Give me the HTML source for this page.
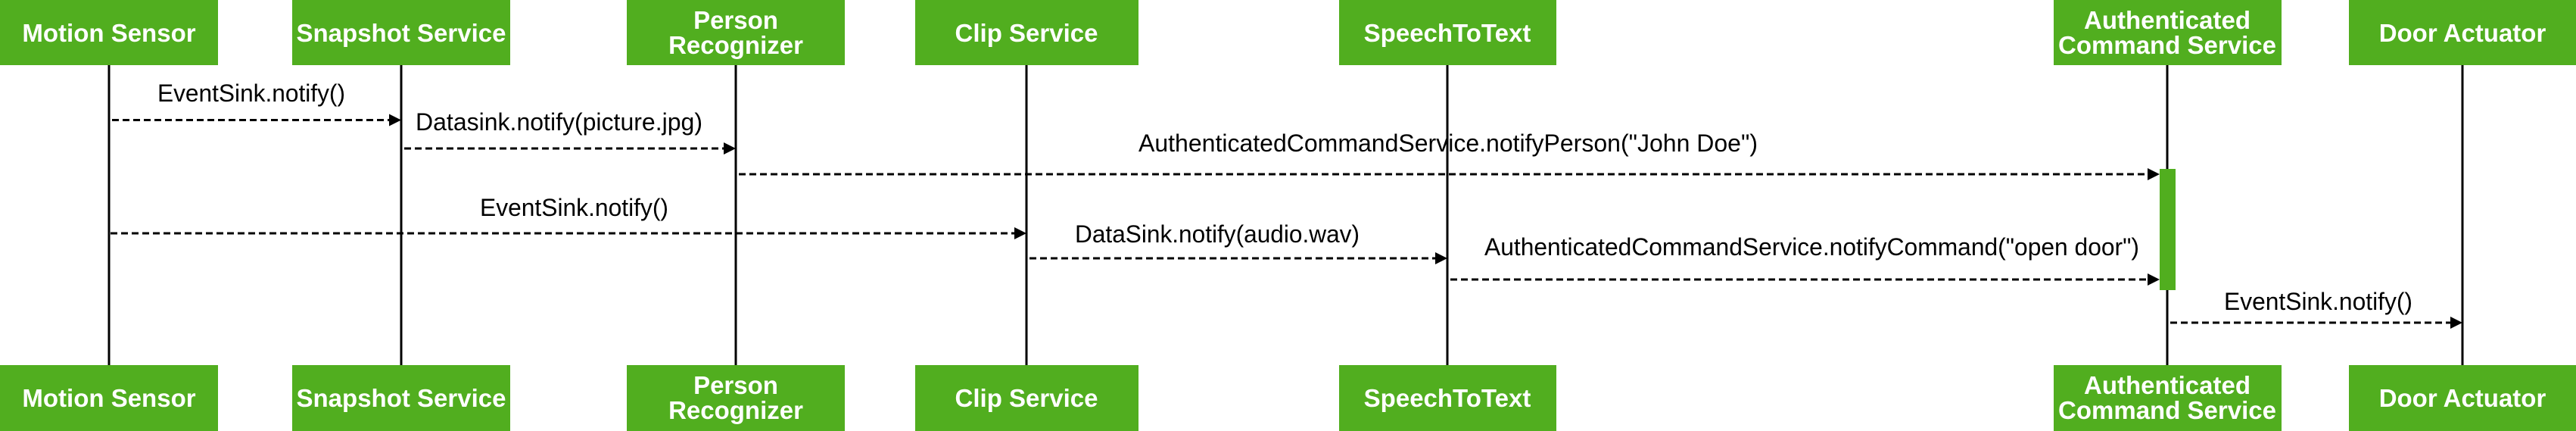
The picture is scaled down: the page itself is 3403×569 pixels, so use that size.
<!DOCTYPE html>
<html><head><meta charset="utf-8"><style>
html,body{margin:0;padding:0;background:#fff;width:3403px;height:569px;overflow:hidden}
svg{display:block}
.b{font-family:"Liberation Sans",sans-serif;font-weight:bold;font-size:33px;fill:#fff}
.t{font-family:"Liberation Sans",sans-serif;font-size:32px;fill:#000}
</style></head><body>
<svg width="3403" height="569" viewBox="0 0 3403 569" xmlns="http://www.w3.org/2000/svg">
<g stroke="#000" stroke-width="3">
<line x1="144" y1="86" x2="144" y2="482"/>
<line x1="530" y1="86" x2="530" y2="482"/>
<line x1="972" y1="86" x2="972" y2="482"/>
<line x1="1356" y1="86" x2="1356" y2="482"/>
<line x1="1912" y1="86" x2="1912" y2="482"/>
<line x1="2863" y1="86" x2="2863" y2="482"/>
<line x1="3253" y1="86" x2="3253" y2="482"/>
</g>
<rect x="2853" y="223" width="21" height="160" fill="#51AE1F"/>
<g stroke="#000" stroke-width="3" stroke-dasharray="9,5" fill="none">
<line x1="148" y1="158.5" x2="514" y2="158.5"/>
<line x1="534" y1="196" x2="956" y2="196"/>
<line x1="976" y1="230" x2="2837" y2="230"/>
<line x1="146" y1="308" x2="1340" y2="308"/>
<line x1="1360" y1="341" x2="1896" y2="341"/>
<line x1="1916" y1="369" x2="2837" y2="369"/>
<line x1="2867" y1="426" x2="3237" y2="426"/>
</g>
<g fill="#000">
<polygon points="514,150.5 530,158.5 514,166.5"/>
<polygon points="956,188 972,196 956,204"/>
<polygon points="2837,222 2853,230 2837,238"/>
<polygon points="1340,300 1356,308 1340,316"/>
<polygon points="1896,333 1912,341 1896,349"/>
<polygon points="2837,361 2853,369 2837,377"/>
<polygon points="3237,418 3253,426 3237,434"/>
</g>
<text class="t" x="208" y="134" textLength="248" lengthAdjust="spacingAndGlyphs">EventSink.notify()</text>
<text class="t" x="549" y="172" textLength="379" lengthAdjust="spacingAndGlyphs">Datasink.notify(picture.jpg)</text>
<text class="t" x="1504" y="200" textLength="818" lengthAdjust="spacingAndGlyphs">AuthenticatedCommandService.notifyPerson("John Doe")</text>
<text class="t" x="634" y="285" textLength="249" lengthAdjust="spacingAndGlyphs">EventSink.notify()</text>
<text class="t" x="1420" y="320" textLength="376" lengthAdjust="spacingAndGlyphs">DataSink.notify(audio.wav)</text>
<text class="t" x="1961" y="337" textLength="865" lengthAdjust="spacingAndGlyphs">AuthenticatedCommandService.notifyCommand("open door")</text>
<text class="t" x="2938" y="409" textLength="249" lengthAdjust="spacingAndGlyphs">EventSink.notify()</text>
<g fill="#51AE1F">
<rect x="0" y="0" width="288" height="86"/><rect x="0" y="482" width="288" height="87"/>
<rect x="386" y="0" width="288" height="86"/><rect x="386" y="482" width="288" height="87"/>
<rect x="828" y="0" width="288" height="86"/><rect x="828" y="482" width="288" height="87"/>
<rect x="1209" y="0" width="295" height="86"/><rect x="1209" y="482" width="295" height="87"/>
<rect x="1769" y="0" width="287" height="86"/><rect x="1769" y="482" width="287" height="87"/>
<rect x="2713" y="0" width="301" height="86"/><rect x="2713" y="482" width="301" height="87"/>
<rect x="3103" y="0" width="300" height="86"/><rect x="3103" y="482" width="300" height="87"/>
</g>
<g class="b" text-anchor="middle">
<text x="144" y="55">Motion Sensor</text><text x="144" y="537">Motion Sensor</text>
<text x="530" y="55">Snapshot Service</text><text x="530" y="537">Snapshot Service</text>
<text x="972" y="38">Person</text><text x="972" y="71">Recognizer</text>
<text x="972" y="520">Person</text><text x="972" y="553">Recognizer</text>
<text x="1356" y="55">Clip Service</text><text x="1356" y="537">Clip Service</text>
<text x="1912" y="55">SpeechToText</text><text x="1912" y="537">SpeechToText</text>
<text x="2863" y="38">Authenticated</text><text x="2863" y="71">Command Service</text>
<text x="2863" y="520">Authenticated</text><text x="2863" y="553">Command Service</text>
<text x="3253" y="55">Door Actuator</text><text x="3253" y="537">Door Actuator</text>
</g>
</svg>
</body></html>
